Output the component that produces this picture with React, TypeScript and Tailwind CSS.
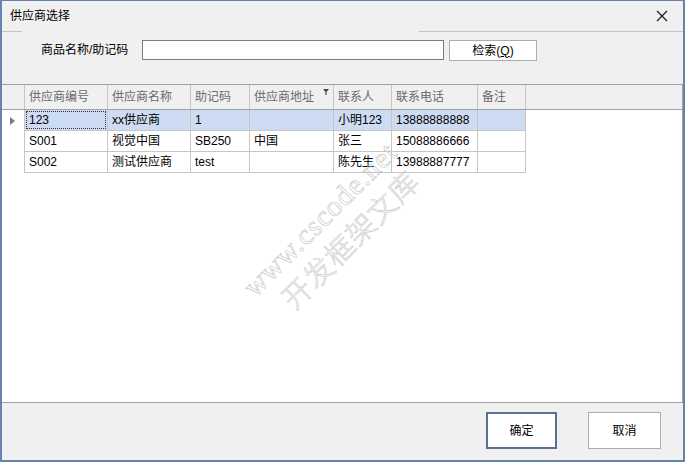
import React from 'react';

const columns = [
    { key: 'code', title: '供应商编号', width: 'w-[83px]' },
    { key: 'name', title: '供应商名称', width: 'w-[83px]' },
    { key: 'mnemonic', title: '助记码', width: 'w-[59px]' },
    { key: 'address', title: '供应商地址', width: 'w-[84px]', filter: true },
    { key: 'contact', title: '联系人', width: 'w-[58px]' },
    { key: 'phone', title: '联系电话', width: 'w-[86px]' },
    { key: 'remark', title: '备注', width: 'w-[48px]' },
];

const rows: Record<string, string>[] = [
    { code: '123', name: 'xx供应商', mnemonic: '1', address: '', contact: '小明123', phone: '13888888888', remark: '' },
    { code: 'S001', name: '视觉中国', mnemonic: 'SB250', address: '中国', contact: '张三', phone: '15088886666', remark: '' },
    { code: 'S002', name: '测试供应商', mnemonic: 'test', address: '', contact: '陈先生', phone: '13988887777', remark: '' },
];

const App: React.FC = () => {
    return (
        <div className="w-[685px] h-[462px] bg-[#f0f0f0] border-t border-x-2 border-b-2 border-[#6683b0] flex flex-col text-[12px] text-black font-['Liberation_Sans','Noto_Sans_CJK_SC',sans-serif] overflow-hidden select-none">
            {/* Title bar */}
            <div className="h-[30px] shrink-0 flex items-center justify-between pl-[8px] pr-[15px]">
                <span className="leading-none">供应商选择</span>
                <svg width="12" height="12" viewBox="0 0 12 12">
                    <path d="M1 1 L11 11 M11 1 L1 11" stroke="#1a1a1a" strokeWidth="1.2" />
                </svg>
            </div>

            {/* Search panel */}
            <div className="h-[53px] shrink-0 flex flex-col">
                <div className="h-px flex">
                    <div className="w-[20px] bg-[#c4c4c4]" />
                    <div className="w-[397px]" />
                    <div className="flex-1 bg-[#c4c4c4]" />
                </div>
                <div className="flex items-start pt-[8px] pl-[39px]">
                    <span className="leading-[20px] w-[101px]">商品名称/助记码</span>
                    <div className="w-[302px] h-[20px] bg-white border border-[#7a7a7a]" />
                    <button className="ml-[5px] w-[88px] h-[21px] bg-white border border-[#adadad] flex items-center justify-center leading-none">
                        检索(<span className="underline">Q</span>)
                    </button>
                </div>
            </div>

            {/* Grid */}
            <div className="h-[318px] shrink-0 bg-white border-t border-[#a0a0a0] border-r border-r-[#a0a0a0] relative">
                <div className="h-[25px] flex bg-[#f0f0f0] border-b border-[#a0a0a0] text-[#6b6b6b]">
                    <div className="w-[23px] border-r border-[#c6c6c6]" />
                    {columns.map((c) => (
                        <div key={c.key} className={`${c.width} border-r border-[#c6c6c6] pl-[4px] flex items-center relative`}>
                            <span className="leading-none">{c.title}</span>
                            {c.filter && (
                                <svg className="absolute right-[4px] top-[4px]" width="6" height="6" viewBox="0 0 6 6">
                                    <path d="M0 0 H6 L3.6 3 V6 H2.4 V3 Z" fill="#4a4a4a" />
                                </svg>
                            )}
                        </div>
                    ))}
                </div>
                {rows.map((r, i) => (
                    <div key={r.code} className="h-[21px] flex">
                        <div className="w-[23px] border-r border-[#c6c6c6] flex items-center pl-[8px]">
                            {i === 0 && (
                                <svg width="5" height="8" viewBox="0 0 5 8">
                                    <path d="M0 0 L5 4 L0 8 Z" fill="#7d7d7d" />
                                </svg>
                            )}
                        </div>
                        {columns.map((c, j) => (
                            <div
                                key={c.key}
                                className={`${c.width} border-r border-b border-[#c6c6c6] flex items-center pl-[4px] relative ${i === 0 ? 'bg-[#cddcf3]' : ''}`}
                            >
                                {i === 0 && j === 0 && (
                                    <div className="absolute inset-[1px] border border-dotted border-[#333]" />
                                )}
                                <span className="leading-none whitespace-nowrap">{r[c.key]}</span>
                            </div>
                        ))}
                    </div>
                ))}

                {/* Watermark */}
                <div className="absolute left-[330px] top-[146px] -translate-x-1/2 -translate-y-1/2 rotate-[-45deg] flex flex-col items-center pointer-events-none text-transparent [-webkit-text-stroke:0.6px_#c6c6c6]">
                    <span className="text-[29px] leading-[34px] font-['Liberation_Serif',serif] tracking-[1px] whitespace-nowrap">www.cscode.net</span>
                    <span className="text-[29px] leading-[34px] font-['Noto_Sans_CJK_SC',sans-serif] font-light tracking-[1px] whitespace-nowrap ml-[14px]">开发框架文库</span>
                </div>
            </div>

            {/* Bottom panel */}
            <div className="flex-1 flex items-start justify-end pt-[9px] pr-[22px] gap-[31px] border-t border-[#a0a0a0]">
                <button className="w-[71px] h-[37px] bg-white border-2 border-[#56709a] flex items-center justify-center leading-none">
                    确定
                </button>
                <button className="w-[73px] h-[37px] bg-white border border-[#adadad] flex items-center justify-center leading-none">
                    取消
                </button>
            </div>
        </div>
    );
};

export default App;
